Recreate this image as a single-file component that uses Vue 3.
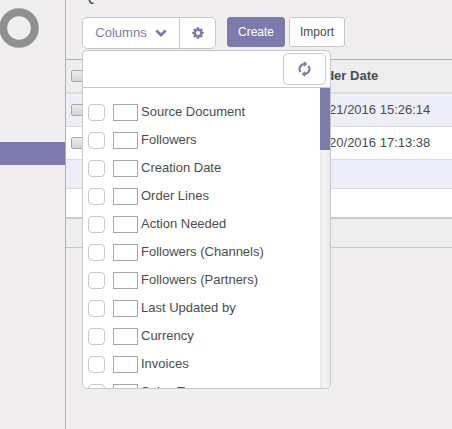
<script setup>
import { ref } from 'vue'

const fields = ref([
  'Source Document',
  'Followers',
  'Creation Date',
  'Order Lines',
  'Action Needed',
  'Followers (Channels)',
  'Followers (Partners)',
  'Last Updated by',
  'Currency',
  'Invoices',
  'Sales Team',
].map((label, id) => ({ id, label, shown: false, order: '' })))

const orders = ref([
  { id: 1, date: '09/21/2016 15:26:14', picked: false },
  { id: 2, date: '09/20/2016 17:13:38', picked: false },
])

const allPicked = ref(false)
const search = ref('')
</script>

<template>
  <div class="page">
    <aside class="side">
      <svg class="logo" viewBox="0 0 40 40" aria-hidden="true">
        <circle cx="20" cy="20" r="15.8" fill="none" stroke="#8f918f" stroke-width="8" />
      </svg>
      <nav class="menu"><a class="current" href="#" aria-label="Current menu"></a></nav>
    </aside>

    <main class="main">
      <header class="head">
        <h1 class="title">Quotations</h1>
        <div class="toolbar">
          <div class="group">
            <button class="columns" type="button">
              <span>Columns</span>
              <svg class="chevron" viewBox="0 0 12 8" aria-hidden="true">
                <path d="M1.3 1.6 6 6.1l4.7-4.5" fill="none" stroke="currentColor" stroke-width="2.7" />
              </svg>
            </button>
            <button class="settings" type="button" aria-label="Settings">
              <svg class="gear" viewBox="0 0 12 12" aria-hidden="true">
                <g fill="currentColor">
                  <rect x="4.7" y="0.3" width="2.6" height="11.4" rx="0.5" />
                  <rect x="4.7" y="0.3" width="2.6" height="11.4" rx="0.5" transform="rotate(45 6 6)" />
                  <rect x="4.7" y="0.3" width="2.6" height="11.4" rx="0.5" transform="rotate(90 6 6)" />
                  <rect x="4.7" y="0.3" width="2.6" height="11.4" rx="0.5" transform="rotate(135 6 6)" />
                  <circle cx="6" cy="6" r="4.3" />
                </g>
                <circle cx="6" cy="6" r="2.1" fill="#fff" />
              </svg>
            </button>

            <div class="panel">
              <div class="search">
                <input v-model="search" class="query" type="text" aria-label="Search columns" />
                <button class="refresh" type="button" aria-label="Refresh">
                  <svg class="arrows" viewBox="0 0 14 16" aria-hidden="true">
                    <g fill="none" stroke="currentColor" stroke-width="2.1">
                      <path d="M2.6 11.2A5 5 0 0 1 6.4 3.1" />
                      <path d="M10.4 4.8A5 5 0 0 1 6.6 12.9" />
                    </g>
                    <path d="M5.8 0v6l3.6-3zM7.2 16v-6l-3.6 3z" fill="currentColor" />
                  </svg>
                </button>
              </div>
              <div class="body">
                <ul class="list">
                  <li v-for="f in fields" :key="f.id" class="item">
                    <input :id="'field-' + f.id" v-model="f.shown" class="tick" type="checkbox" />
                    <input v-model="f.order" class="order" type="text" :aria-label="f.label + ' order'" />
                    <label :for="'field-' + f.id">{{ f.label }}</label>
                  </li>
                </ul>
                <div class="track"><div class="thumb"></div></div>
              </div>
            </div>
          </div>
          <div class="actions">
            <button class="action primary" type="button">Create</button>
            <button class="action" type="button">Import</button>
          </div>
        </div>
      </header>

      <table class="orders">
        <thead>
          <tr>
            <th class="pick"><input v-model="allPicked" class="box" type="checkbox" aria-label="Select all" /></th>
            <th>Order Date</th>
          </tr>
        </thead>
        <tbody>
          <tr v-for="o in orders" :key="o.id" class="order-row">
            <td class="pick"><input v-model="o.picked" class="box" type="checkbox" :aria-label="'Select ' + o.date" /></td>
            <td>{{ o.date }}</td>
          </tr>
          <tr class="blank"><td colspan="2"></td></tr>
          <tr class="blank"><td colspan="2"></td></tr>
        </tbody>
        <tfoot>
          <tr><td colspan="2"></td></tr>
        </tfoot>
      </table>
    </main>
  </div>
</template>

<style>
body {
  background: #f0eeee;
}
</style>

<style scoped>
.page {
  display: flex;
  min-height: 100vh;
  overflow: hidden;
  box-sizing: border-box;
  font-family: "Liberation Sans", Arial, sans-serif;
  font-size: 13px;
  color: #4c4c4c;
}
.page *,
.page *::before {
  box-sizing: border-box;
}
button,
input {
  margin: 0;
  font: inherit;
}
button {
  display: flex;
  align-items: center;
  justify-content: center;
  padding: 0;
  background: #fff;
  border: 1px solid #c8c8c8;
}
.side {
  flex: 0 0 66px;
  border-right: 1px solid #afafb6;
}
.logo {
  display: block;
  width: 40px;
  height: 40px;
  margin: 8px 0 0 -1px;
}
.menu {
  margin-top: 94px;
}
.current {
  display: block;
  height: 23px;
  background: #7c7bad;
}
.main {
  flex: 1;
  min-width: 0;
}
.head {
  display: flow-root;
  height: 59px;
  padding-left: 16px;
}
.title {
  height: 20px;
  margin: -16px 0 0;
  font-size: 18px;
  font-weight: 400;
  line-height: 20px;
}
.toolbar {
  display: flex;
  align-items: flex-start;
  gap: 11px;
  padding-top: 13px;
}
.group {
  position: relative;
  display: flex;
}
.group button {
  height: 32px;
  color: #7c7bad;
}
.group .columns {
  gap: 8px;
  width: 98px;
  border-radius: 5px 0 0 5px;
}
.columns span,
.item label {
  padding-bottom: 2px;
}
.group .settings {
  width: 37px;
  margin-left: -1px;
  border-radius: 0 5px 5px 0;
}
.chevron {
  width: 12px;
  height: 8px;
}
.gear {
  width: 12px;
  height: 12px;
}
.actions {
  display: flex;
  gap: 4px;
}
.action {
  height: 30px;
  padding: 0 10px;
  border-radius: 3px;
  font-size: 12px;
  color: #4c4c4c;
}
.primary {
  background: #7c7bad;
  border-color: #7c7bad;
  color: #fff;
}
.panel {
  position: absolute;
  top: 33px;
  left: 0;
  z-index: 1;
  width: 249px;
  overflow: hidden;
  background: #fff;
  border: 1px solid #c8c8c8;
  border-radius: 5px;
}
.search {
  display: flex;
  align-items: center;
  height: 37px;
  padding-right: 4px;
  border-bottom: 1px solid #c8c8c8;
}
.query {
  flex: 1;
  min-width: 0;
  height: 32px;
  padding: 0 8px;
  border: 0;
  outline: 0;
  background: transparent;
}
.refresh {
  width: 43px;
  border-radius: 5px;
}
.arrows {
  width: 14px;
  height: 16px;
}
.body {
  display: flex;
  height: 300px;
}
.list {
  flex: 1;
  margin: 0;
  padding: 10px 0 0 5px;
  overflow: hidden;
  list-style: none;
}
.item {
  display: flex;
  align-items: center;
  height: 28px;
}
.tick {
  appearance: none;
  width: 17px;
  height: 17px;
  margin-right: 8px;
  background: #fff;
  border: 1px solid #c8c8c8;
  border-radius: 4px;
}
.order {
  width: 25px;
  height: 17px;
  margin-right: 3px;
  padding: 0 2px;
  background: #fff;
  border: 1px solid #a6a6a6;
}
.track {
  width: 10px;
  background: linear-gradient(90deg, #e9e9e9, #f3f3f3 50%, #e9e9e9);
}
.thumb {
  height: 62px;
  background: #7c7bad;
}
.orders {
  width: 100%;
  border-spacing: 0;
  border-top: 1px solid #afafb6;
  table-layout: fixed;
  line-height: 16px;
}
.orders th,
.orders td {
  height: 33px;
  padding: 0;
  text-align: left;
  border-bottom: 1px solid #dcdce0;
}
.orders th {
  height: 34px;
  background: #eee;
  border-bottom: 2px solid #ddd;
}
.orders .pick {
  width: 245px;
  padding-left: 5px;
}
.orders tbody td {
  background: #fff;
}
.orders tbody tr:nth-child(odd) td {
  background: #eeeef8;
}
.orders .blank td {
  height: 29px;
}
.orders .blank:last-child td {
  height: 30px;
  border-bottom: 2px solid #c8c8c8;
}
.orders tfoot td {
  height: 29px;
  background: #eee;
  border-bottom: 1px solid #c8c8c8;
}
.box {
  display: block;
  appearance: none;
  width: 13px;
  height: 12px;
  background: linear-gradient(#ededed, #d4d4d4);
  border: 1px solid #a6a6a6;
  border-radius: 2px;
}
</style>
